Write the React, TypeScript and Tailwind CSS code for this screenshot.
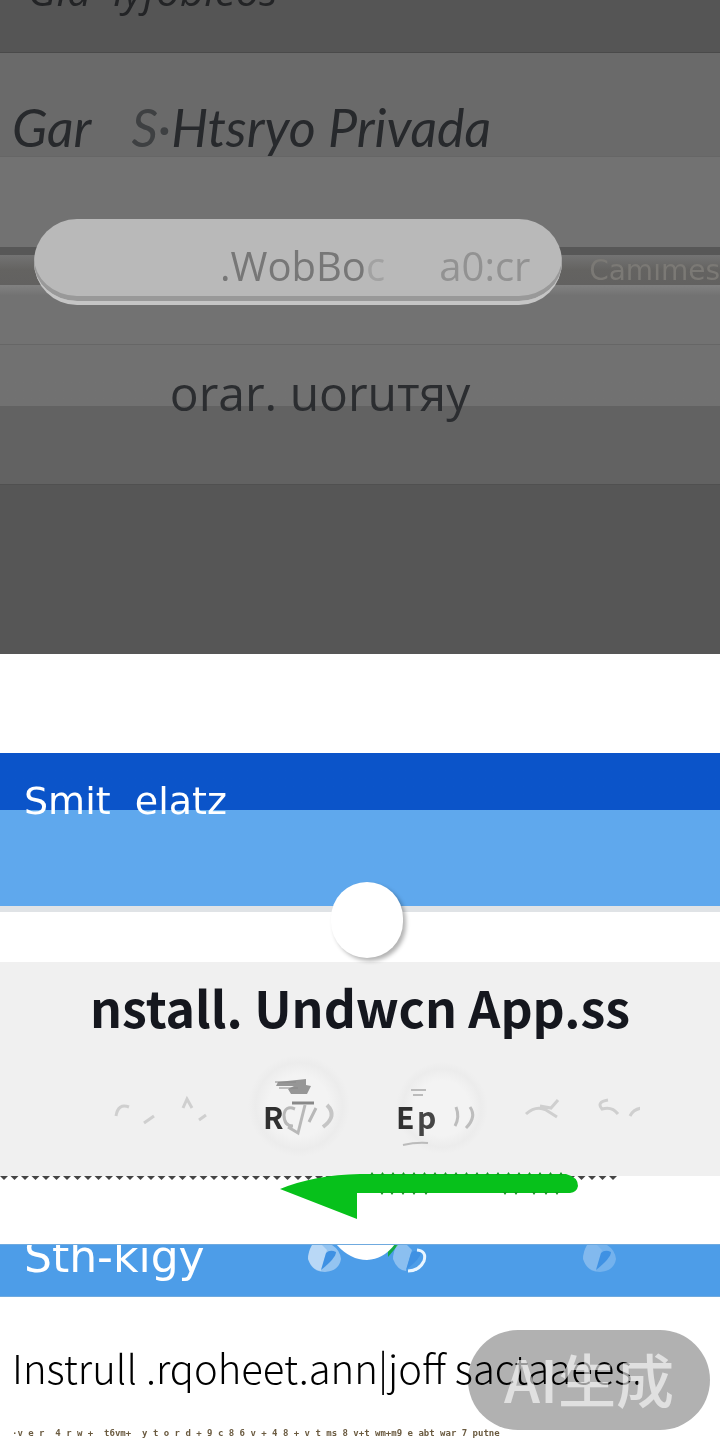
const zigzag = Array.from({ length: 59 }, (_, i) => i * 10.5);
const edgeTop = Array.from({ length: 19 }, (_, i) => 90 + i * 10.5);
const edgeBottom = [100, 110, 121, 132, 144, 223, 234, 252, 264, 275];

type LeafTone = "bright" | "ring" | "faint";

function Leaf({ tone, className = "" }: { tone: LeafTone; className?: string }) {
  const opacity = tone === "bright" ? 0.4 : tone === "faint" ? 0.22 : 0;
  return (
    <svg viewBox="0 0 34 28" className={`h-7 w-[34px] shrink-0 ${className}`} aria-hidden="true">
      <path d="M4 0 Q0 7 0 14 Q4 27 17 27 Q31 26 33 14 Q32 5 24 0 Z" fill="#fff" fillOpacity={opacity} />
      <path d="M4 0 Q0 7 0 14 Q4 25 13 26 L19 5 L14 0 Z" fill="#fff" fillOpacity={tone === "faint" ? 0.1 : 0.35} />
      <path d="M13 25 L18 8 Q22 4 28 7 Q28 13 13 25 Z" fill="#3f91e3" />
      {tone === "ring" ? (
        <path d="M24 5 Q34 6 31 16 Q26 26 15 26" fill="none" stroke="#eaf6ff" strokeWidth="3" />
      ) : null}
    </svg>
  );
}

function Track() {
  return (
    <div className="absolute inset-x-0 top-[90px]" aria-hidden="true">
      <div className="h-2 bg-[#575757]" />
      <div className="h-[30px] bg-linear-to-b from-[#737373] via-[#646361] to-[#626160]" />
      <div className="h-[10px] bg-linear-to-b from-[#818181] to-[#737373]" />
    </div>
  );
}

function Scribbles() {
  return (
    <svg viewBox="0 0 560 110" className="mt-1.5 h-[110px] w-[560px]" fill="none" aria-hidden="true">
      <defs>
        <radialGradient id="halo">
          <stop offset="0.6" stopColor="#f3f3f3" />
          <stop offset="0.85" stopColor="#ececec" />
          <stop offset="1" stopColor="#f0f0f0" />
        </radialGradient>
      </defs>
      <circle cx="219" cy="58" r="51" fill="url(#halo)" />
      <circle cx="362" cy="60" r="46" fill="url(#halo)" />
      <g stroke="#cfcfcf" strokeWidth="3">
        <path d="M36 68 Q38 55 49 59 M64 75 L74 68 M103 60 L107 51 L112 60 M119 72 L126 67" />
        <path d="M446 66 Q456 57 466 62 L477 69 M460 58 L471 60 L478 52" />
        <path d="M528 52 Q516 54 522 61 Q532 58 538 66 M550 68 Q554 60 564 60" />
      </g>
      <path d="M198 34 L226 31 L226 37 L231 38 L227 46 L211 46 L208 41 L214 38 L196 38 Z" fill="#969696" />
      <path d="M195 34 H216 M199 40 H218" stroke="#888" strokeWidth="1" />
      <path d="M212 55 H234" stroke="#888" strokeWidth="3" />
      <path d="M215 61 Q205 57 204 67 Q204 78 213 78 M225 57 L218 85 L208 79 M229 74 L236 60" stroke="#b8b8b8" strokeWidth="3" />
      <path d="M247 57 Q258 68 243 79" stroke="#c5c5c5" strokeWidth="4" />
      <path d="M331 42 H346 M333 47 H343" stroke="#bbb" strokeWidth="2" />
      <path d="M323 97 Q336 94 348 95" stroke="#bbb" strokeWidth="2" />
      <path d="M376 59 Q380 69 375 78 M390 59 Q397 69 386 80" stroke="#bdbdbd" strokeWidth="3" />
      <text x="183" y="81" fill="#303030" className="font-['Noto_Sans_CJK_SC'] text-[30px] font-bold">R</text>
      <text x="316" y="81" fill="#303030" className="font-['Noto_Sans_CJK_SC'] text-[30px] font-bold">E</text>
      <text x="337" y="81" fill="#454545" className="font-['Noto_Sans_CJK_SC'] text-[30px] font-bold">p</text>
    </svg>
  );
}

export default function App() {
  return (
    <main className="w-full overflow-hidden bg-white font-['Open_Sans',sans-serif]">
      <header className="h-[52px] overflow-hidden bg-[#555555] pl-7">
        <p className="-mt-9 text-[42px] leading-[52px] whitespace-pre text-[#232426] italic">Gld  lyfobleos</p>
      </header>

      <section className="h-26 border-t border-[#4a4a4a] bg-[#6a6a6a] pt-12 pl-3 font-['Lato',sans-serif] text-[52px] leading-13 whitespace-nowrap text-[#27292c]">
        <h1 className="flex gap-10 font-normal italic">
          <span>Gar</span>
          <span className="flex">
            <span className="text-[#3e4042]">S·</span>
            <span>Htsryo Privada</span>
          </span>
        </h1>
      </section>

      <section className="relative h-47 border-t border-[#666] bg-[#727272] pt-[62px]">
        <Track />
        <span className="absolute top-[98px] right-0 font-['DejaVu_Sans'] text-[28px] leading-8 text-[#7b7975]">Camımes</span>
        <button className="relative ml-[34px] flex h-[86px] w-[73.4%] items-center justify-between rounded-[43px] border-b-4 border-[#c5c5c5] bg-[#b9b9b9] pt-3 pr-8 pl-[186px] font-['Open_Sans'] text-[40px] text-[#777] shadow-[inset_0_-5px_0_#999]">
          <span>.WobBo<span className="text-[#a2a2a2]">c</span></span>
          <span className="text-[#929292]">a0:cr</span>
        </button>
      </section>

      <section className="h-[141px] border-y border-t-[#666] border-b-[#505050] bg-linear-to-b from-[#717171] from-44% to-[#626262] to-44% pt-5 pr-20 text-center">
        <h2 className="font-['Open_Sans'] text-[48px] leading-14 text-[#2b2d30]">orar. uoruтяy</h2>
      </section>
      <div className="h-[169px] bg-[#565656]" />

      <div className="h-[99px] bg-white" />

      <section className="relative h-[159px] border-b-6 border-[#e0e3e6] bg-linear-to-b from-[#0b54c9] from-37% to-[#5fa8ed] to-37% pt-5 pl-6">
        <h2 className="font-['DejaVu_Sans'] text-[38px] leading-14 whitespace-pre text-white">Smit  elatz</h2>
        <button
          aria-label="Open"
          className="absolute top-[129px] left-[46%] h-[76px] w-18 rounded-full bg-white shadow-[3px_3px_4px_#0000004d]"
        />
      </section>

      <section className="mt-[50px] flex h-[214px] flex-col items-center bg-[#f0f0f0] pt-2">
        <h2 className="font-['Noto_Sans_CJK_SC',sans-serif] text-[50px] leading-18 font-bold whitespace-nowrap text-[#15171e]">
          nstall. Undwcn App.ss
        </h2>
        <Scribbles />
      </section>

      <section className="relative h-17">
        <svg className="absolute top-0 left-0 h-2 w-[620px]" viewBox="0 0 620 8" aria-hidden="true">
          {zigzag.map((x) => (
            <path key={x} d={`M${x} 0 h8 l-4 4 z`} fill="#444" />
          ))}
        </svg>
        <svg className="absolute -top-2 left-[38.9%] h-[94px] w-[300px]" viewBox="0 0 300 94" aria-hidden="true">
          <path d="M0 21 Q34 7 80 6 H286 Q298 9 298 18 Q297 24 290 25 H77 V51 L0 21 Z" fill="#07c11b" />
          {edgeTop.map((x) => (
            <path key={x} d={`M${x} 7 l2 -3 l2 3 z`} fill="#159a22" />
          ))}
          {edgeBottom.map((x) => (
            <path key={x} d={`M${x} 24 l2 3 l2 -3 z`} fill="#159a22" />
          ))}
        </svg>
      </section>

      <section className="relative flex h-[53px] items-start overflow-hidden border-y border-[#6faadf] bg-[#4d9de8]">
        <h2 className="-mt-4 ml-6 w-[284px] shrink-0 font-['DejaVu_Sans'] text-[44px] leading-14 text-white">Sth-kigy</h2>
        <Leaf tone="bright" />
        <svg viewBox="0 0 51 16" className="h-4 w-[51px] shrink-0 overflow-visible" aria-hidden="true">
          <path d="M46 12 L57 -1 H46 Z" fill="#12a846" />
          <path d="M-6 -1 Q8 15 25 15 Q42 14 53 -1 Z" fill="#fff" />
        </svg>
        <Leaf tone="ring" />
        <Leaf tone="faint" className="ml-[156px]" />
      </section>

      <section className="relative h-[143px] bg-white pt-10 pl-3">
        <h2 className="font-['Noto_Sans_CJK_SC',sans-serif] text-[40px] leading-15 font-light whitespace-nowrap text-black">
          Instrull .rqoheet.ann|joff sactaaees.
        </h2>
        <p className="mt-7 font-['DejaVu_Sans_Mono'] text-[9px] leading-4 font-bold whitespace-pre text-[#6b5b40]">
          {"·v e r  4 r w +  t6vm+  y t o r d + 9 c 8 6 v + 4 8 + v t ms 8 v+t wm+m9 e abt war 7 putne"}
        </p>
        <div className="absolute top-[33px] right-[10px] h-[100px] w-[242px] rounded-full bg-[#b1b1b1] mix-blend-multiply" />
        <span className="absolute top-[33px] right-[10px] w-[242px] text-center font-['Noto_Sans_CJK_SC',sans-serif] text-[58px] leading-[96px] font-medium text-white/60">
          AI生成
        </span>
      </section>
    </main>
  );
}
